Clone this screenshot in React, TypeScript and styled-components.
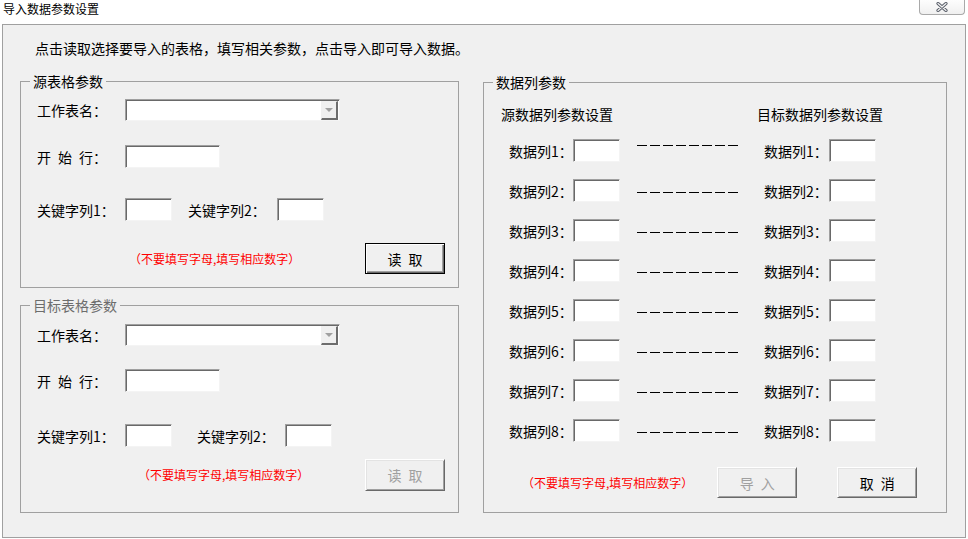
import React from "react";
import styled, { createGlobalStyle } from "styled-components";

const GlobalStyle = createGlobalStyle`
  html, body { margin: 0; padding: 0; background: #fff; }
  body {
    font-family: "Noto Sans CJK SC", "Liberation Sans", sans-serif;
    font-size: 14px;
    color: #000;
  }
  * { box-sizing: border-box; }
`;

const Window = styled.div`
  width: 968px;
  height: 539px;
  background: #fff;
  display: flex;
  flex-direction: column;
  overflow: hidden;
`;

const TitleBar = styled.div`
  height: 24px;
  display: flex;
  align-items: flex-start;
  justify-content: space-between;
  padding: 0 3px;
`;

const Title = styled.div`
  font-size: 12px;
  line-height: 16px;
  padding-top: 1px;
`;

const CloseButton = styled.div`
  width: 46px;
  height: 15px;
  border: 1px solid #a9a9a9;
  border-top: none;
  border-radius: 0 0 4px 4px;
  background: linear-gradient(#fdfdfd, #f0f0f0);
  display: flex;
  align-items: center;
  justify-content: center;
`;

const Panel = styled.div`
  margin-left: 2px;
  width: 964px;
  height: 514px;
  border: 1px solid #a0a0a0;
  background: #f0f0f0;
  padding: 15px 17px 0 17px;
`;

const Intro = styled.div`
  line-height: 16px;
  margin: 0 0 17px 15px;
`;

const Columns = styled.div`
  display: grid;
  grid-template-columns: 439px 464px;
  column-gap: 24px;
  align-items: start;
`;

const LeftColumn = styled.div`
  display: flex;
  flex-direction: column;
  gap: 9px;
`;

const Group = styled.fieldset<{ $height: number; $offset?: number }>`
  margin: ${(p) => p.$offset ?? 0}px 0 0 0;
  padding: 0;
  min-width: 0;
  height: ${(p) => p.$height}px;
  border: 1px solid #a0a0a0;
`;

const Legend = styled.legend<{ $muted?: boolean }>`
  margin-left: 9px;
  padding: 0 3px;
  font-size: 14px;
  line-height: 16px;
  color: ${(p) => (p.$muted ? "#6d6d6d" : "#000")};
`;

const GroupBody = styled.div<{ $pad: string }>`
  padding: ${(p) => p.$pad};
  display: flex;
  flex-direction: column;
`;

const FormRow = styled.div<{ $top: number; $h: number }>`
  display: flex;
  align-items: center;
  margin-top: ${(p) => p.$top}px;
  height: ${(p) => p.$h}px;
`;

const FieldLabel = styled.span<{ $width: number; $gap?: number }>`
  width: ${(p) => p.$width}px;
  margin-left: ${(p) => p.$gap ?? 0}px;
  flex: none;
  line-height: 16px;
  white-space: nowrap;
`;

const TextBox = styled.input<{ $width: number; $height?: number }>`
  width: ${(p) => p.$width}px;
  height: ${(p) => p.$height ?? 23}px;
  flex: none;
  margin: 0;
  padding: 0 3px;
  background: #fff;
  border-style: solid;
  border-width: 1px;
  border-color: #a0a0a0 #f4f4f4 #f4f4f4 #a0a0a0;
  box-shadow: inset 1px 1px 0 #696969;
  outline: none;
  font: inherit;
`;

const Combo = styled.div`
  width: 215px;
  height: 22px;
  flex: none;
  background: #fff;
  display: flex;
  justify-content: flex-end;
  border-style: solid;
  border-width: 1px;
  border-color: #a0a0a0 #f4f4f4 #f4f4f4 #a0a0a0;
  box-shadow: inset 1px 1px 0 #696969;
  padding: 1px 1px 0 0;
`;

const ComboButton = styled.div`
  width: 17px;
  height: 100%;
  background: #f0f0f0;
  border-style: solid;
  border-width: 1px 2px 2px 1px;
  border-color: #f0f0f0 #6d6d6d #6d6d6d #f0f0f0;
  display: flex;
  align-items: center;
  justify-content: center;
`;

const Arrow = styled.div`
  width: 0;
  height: 0;
  border-left: 4px solid transparent;
  border-right: 4px solid transparent;
  border-top: 4px solid #a0a0a0;
`;

const Footer = styled.div<{ $top: number; $indent: number; $h?: number }>`
  display: flex;
  align-items: center;
  margin-top: ${(p) => p.$top}px;
  height: ${(p) => p.$h ?? 31}px;
  padding-left: ${(p) => p.$indent}px;
`;

const Hint = styled.span`
  color: #ff0000;
  font-size: 12px;
  line-height: 14px;
  white-space: nowrap;
`;

const Button = styled.div<{ $variant: "default" | "normal" | "disabled"; $push?: number }>`
  width: 80px;
  height: 100%;
  flex: none;
  margin-left: ${(p) => (p.$push !== undefined ? `${p.$push}px` : "auto")};
  background: #f0f0f0;
  display: flex;
  align-items: center;
  justify-content: center;
  font-size: 14px;
  line-height: 16px;
  color: ${(p) => (p.$variant === "disabled" ? "#a0a0a0" : "#000")};
  border: 1px solid ${(p) => (p.$variant === "default" ? "#000" : "#ffffff")};
  border-right-color: ${(p) => (p.$variant === "default" ? "#000" : "#696969")};
  border-bottom-color: ${(p) => (p.$variant === "default" ? "#000" : "#696969")};
  box-shadow: ${(p) =>
    p.$variant === "default"
      ? "inset 1px 1px 0 #fff, inset -1px -1px 0 #696969, inset -2px -2px 0 #a0a0a0"
      : "inset 1px 1px 0 #e3e3e3, inset -1px -1px 0 #a0a0a0"};
`;

const MapHeader = styled.div`
  display: grid;
  grid-template-columns: 256px auto;
  line-height: 16px;
`;

const MapRows = styled.div`
  display: flex;
  flex-direction: column;
  gap: 17px;
  margin: 17px 0 0 8px;
`;

const MapRow = styled.div`
  display: grid;
  grid-template-columns: 64px 47px 144px 65px 47px;
  align-items: center;
  height: 23px;
`;

const RowLabel = styled.span`
  line-height: 16px;
  white-space: nowrap;
`;

const Dashes = styled.div<{ $shift: number }>`
  width: 101px;
  height: 1px;
  margin-left: 17px;
  transform: translateY(${(p) => p.$shift}px);
  background: repeating-linear-gradient(to right, #000 0 10px, transparent 10px 13px);
`;

const CloseGlyph = () => (
  <svg width="12" height="10" viewBox="0 0 12 10">
    <path d="M2 1.5 L10 8.5 M10 1.5 L2 8.5" stroke="#5a5f6a" strokeWidth="3.2" strokeLinecap="round" />
    <path d="M2 1.5 L10 8.5 M10 1.5 L2 8.5" stroke="#f4f4f4" strokeWidth="1.2" strokeLinecap="round" />
  </svg>
);

const SheetCombo = () => (
  <Combo>
    <ComboButton>
      <Arrow />
    </ComboButton>
  </Combo>
);

const SP = "\u2002";

const dashShift = [-5, 2, 2, 2, 2, 2, 2, 2];

export default function App() {
  return (
    <>
      <GlobalStyle />
      <Window>
        <TitleBar>
          <Title>导入数据参数设置</Title>
          <CloseButton>
            <CloseGlyph />
          </CloseButton>
        </TitleBar>
        <Panel>
          <Intro>点击读取选择要导入的表格，填写相关参数，点击导入即可导入数据。</Intro>
          <Columns>
            <LeftColumn>
              <Group $height={215}>
                <Legend>源表格参数</Legend>
                <GroupBody $pad="10px 13px 0 16px">
                  <FormRow $top={0} $h={22}>
                    <FieldLabel $width={88}>工作表名：</FieldLabel>
                    <SheetCombo />
                  </FormRow>
                  <FormRow $top={24} $h={23}>
                    <FieldLabel $width={88}>{`开${SP}始${SP}行：`}</FieldLabel>
                    <TextBox $width={95} readOnly />
                  </FormRow>
                  <FormRow $top={30} $h={23}>
                    <FieldLabel $width={88}>关键字列1：</FieldLabel>
                    <TextBox $width={47} readOnly />
                    <FieldLabel $width={89} $gap={16}>关键字列2：</FieldLabel>
                    <TextBox $width={47} readOnly />
                  </FormRow>
                  <Footer $top={22} $indent={92}>
                    <Hint>（不要填写字母,填写相应数字）</Hint>
                    <Button $variant="default">{`读${SP}取`}</Button>
                  </Footer>
                </GroupBody>
              </Group>
              <Group $height={216}>
                <Legend $muted>目标表格参数</Legend>
                <GroupBody $pad="10px 13px 0 16px">
                  <FormRow $top={0} $h={23}>
                    <FieldLabel $width={88}>工作表名：</FieldLabel>
                    <SheetCombo />
                  </FormRow>
                  <FormRow $top={23} $h={23}>
                    <FieldLabel $width={88}>{`开${SP}始${SP}行：`}</FieldLabel>
                    <TextBox $width={95} readOnly />
                  </FormRow>
                  <FormRow $top={32} $h={23}>
                    <FieldLabel $width={88}>关键字列1：</FieldLabel>
                    <TextBox $width={47} readOnly />
                    <FieldLabel $width={88} $gap={25}>关键字列2：</FieldLabel>
                    <TextBox $width={47} readOnly />
                  </FormRow>
                  <Footer $top={12} $indent={101} $h={32}>
                    <Hint>（不要填写字母,填写相应数字）</Hint>
                    <Button $variant="disabled">{`读${SP}取`}</Button>
                  </Footer>
                </GroupBody>
              </Group>
            </LeftColumn>
            <Group $height={439} $offset={1}>
              <Legend>数据列参数</Legend>
              <GroupBody $pad="16px 0 0 17px">
                <MapHeader>
                  <span>源数据列参数设置</span>
                  <span>目标数据列参数设置</span>
                </MapHeader>
                <MapRows>
                  {dashShift.map((shift, i) => (
                    <MapRow key={i}>
                      <RowLabel>{`数据列${i + 1}：`}</RowLabel>
                      <TextBox $width={47} readOnly />
                      <Dashes $shift={shift} />
                      <RowLabel>{`数据列${i + 1}：`}</RowLabel>
                      <TextBox $width={47} readOnly />
                    </MapRow>
                  ))}
                </MapRows>
                <Footer $top={25} $indent={21}>
                  <Hint>（不要填写字母,填写相应数字）</Hint>
                  <Button $variant="disabled" $push={24}>{`导${SP}入`}</Button>
                  <Button $variant="normal" $push={40}>{`取${SP}消`}</Button>
                </Footer>
              </GroupBody>
            </Group>
          </Columns>
        </Panel>
      </Window>
    </>
  );
}
